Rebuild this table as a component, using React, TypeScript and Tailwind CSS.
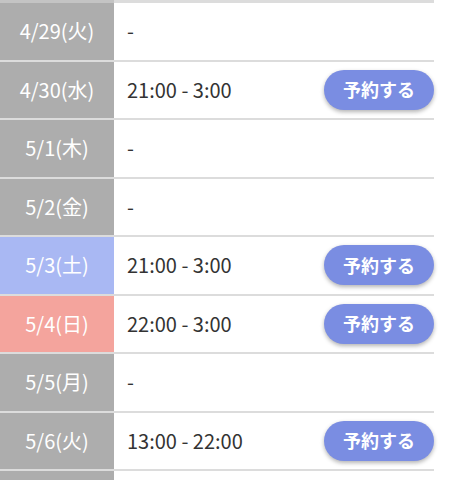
const rows: { date: string; time: string; kind: 'normal' | 'sat' | 'sun'; open: boolean }[] = [
  { date: '4/29(火)', time: '-', kind: 'normal', open: false },
  { date: '4/30(水)', time: '21:00 - 3:00', kind: 'normal', open: true },
  { date: '5/1(木)', time: '-', kind: 'normal', open: false },
  { date: '5/2(金)', time: '-', kind: 'normal', open: false },
  { date: '5/3(土)', time: '21:00 - 3:00', kind: 'sat', open: true },
  { date: '5/4(日)', time: '22:00 - 3:00', kind: 'sun', open: true },
  { date: '5/5(月)', time: '-', kind: 'normal', open: false },
  { date: '5/6(火)', time: '13:00 - 22:00', kind: 'normal', open: true },
  // next row, only its top edge shows
  { date: '', time: '', kind: 'normal', open: false },
];

export default function App() {
  return (
    <div
      className="h-[480px] w-[461px] overflow-hidden bg-white"
      style={{ fontFamily: '"Noto Sans CJK JP", "Noto Sans", sans-serif' }}
    >
      <div className="w-[434px]">
        <div className="flex h-[3px]">
          <div className="w-[114px] bg-[#c4c4c4]" />
          <div className="flex-1 bg-[#dcdcdc]" />
        </div>
        {rows.map((r, i) => (
          <div key={i} className="flex border-b-2 border-[#dcdcdc]">
            <div
              className={`flex h-[56.5px] w-[114px] shrink-0 items-center justify-center text-[20px] text-white ${
                r.kind === 'sat' ? 'bg-[#a9b8f3]' : r.kind === 'sun' ? 'bg-[#f4a49d]' : 'bg-[#adadad]'
              }`}
            >
              {r.date}
            </div>
            <div className="flex flex-1 items-center justify-between pl-[13px]">
              <span className="text-[20px] text-[#333]">{r.time}</span>
              {r.open && (
                <button className="h-[40px] w-[110px] rounded-full bg-[#7a8de2] text-[18px] font-semibold text-white shadow-[0_2px_4px_rgba(0,0,0,0.3)]">
                  予約する
                </button>
              )}
            </div>
          </div>
        ))}
      </div>
    </div>
  );
}
